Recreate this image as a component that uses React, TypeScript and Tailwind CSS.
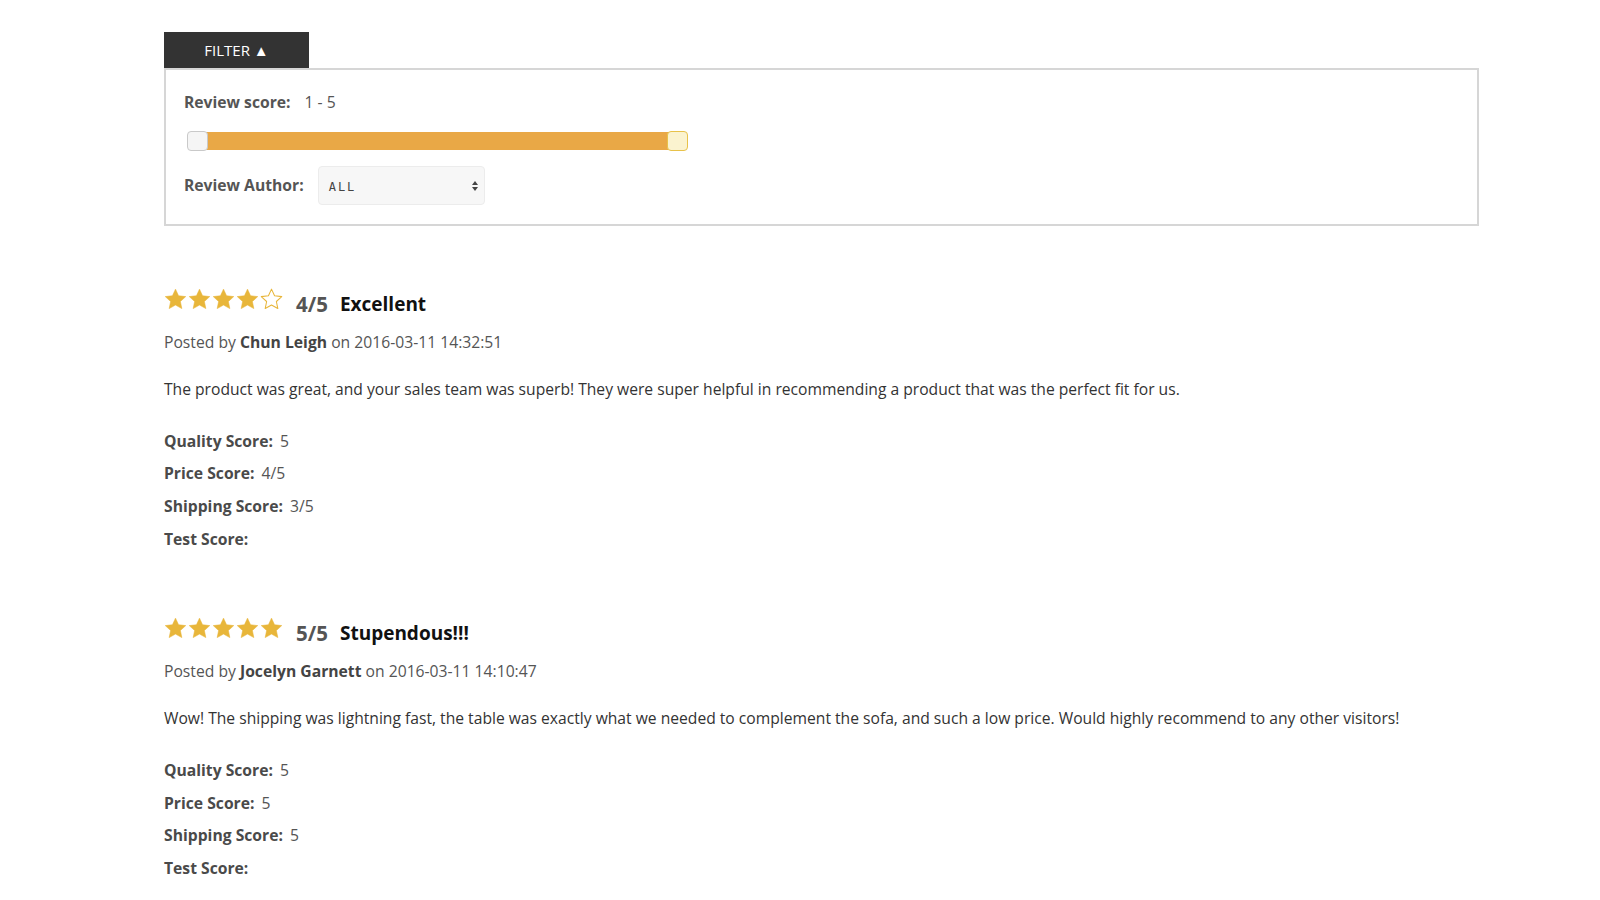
import React from "react";

type Review = {
  score: number;
  title: string;
  author: string;
  date: string;
  body: string;
  quality: string;
  price: string;
  shipping: string;
  test: string;
};

const reviews: Review[] = [
  {
    score: 4,
    title: "Excellent",
    author: "Chun Leigh",
    date: "2016-03-11 14:32:51",
    body: "The product was great, and your sales team was superb! They were super helpful in recommending a product that was the perfect fit for us.",
    quality: "5",
    price: "4/5",
    shipping: "3/5",
    test: "",
  },
  {
    score: 5,
    title: "Stupendous!!!",
    author: "Jocelyn Garnett",
    date: "2016-03-11 14:10:47",
    body: "Wow! The shipping was lightning fast, the table was exactly what we needed to complement the sofa, and such a low price. Would highly recommend to any other visitors!",
    quality: "5",
    price: "5",
    shipping: "5",
    test: "",
  },
];

function Star({ filled }: { filled: boolean }) {
  return (
    <svg width="23" height="22" viewBox="0 0 24 23" className="block">
      <path
        d="M12 1.2l3.2 6.9 7.5.9-5.6 5.1 1.5 7.4L12 17.8l-6.6 3.7 1.5-7.4L1.3 9l7.5-.9z"
        fill={filled ? "#e8b63a" : "none"}
        stroke="#e8b63a"
        strokeWidth={filled ? 0.6 : 1.1}
        strokeLinejoin="round"
      />
    </svg>
  );
}

function ScoreRow({ label, value }: { label: string; value: string }) {
  return (
    <div className="h-[32.8px] flex items-center text-[15.7px]">
      <span className="font-bold text-[#4a4a4a]">{label}:</span>
      <span className="ml-[7px] text-[#555]">{value}</span>
    </div>
  );
}

export default function App() {
  return (
    <div
      className="min-h-[900px] bg-white pl-[164px] pt-[32px]"
      style={{ fontFamily: '"Open Sans", "Liberation Sans", sans-serif' }}
    >
      <div className="w-[1315px]">
        {/* Filter tab */}
        <div className="w-[145px] h-[36px] bg-[#333] text-white text-[15px] flex items-center justify-center">
          FILTER ▲
        </div>

        {/* Filter panel */}
        <div className="border-2 border-[#d6d6d6] h-[158px] pl-[18px] pt-[22px]">
          <div className="flex items-center h-[22px] text-[15.7px]">
            <span className="font-bold text-[#555]">Review score:</span>
            <span className="ml-[14px] text-[#555]">1 - 5</span>
          </div>

          {/* Slider */}
          <div className="mt-[17px] ml-[3px] w-[501px] h-[20px] relative">
            <div className="absolute left-[6px] right-[6px] top-[1px] h-[18px] bg-[#e9a846] rounded-[2px]" />
            <div className="absolute left-0 top-0 w-[21px] h-[20px] rounded-[4px] bg-[#f5f5f5] border border-[#c9c9c9]" />
            <div className="absolute right-0 top-0 w-[21px] h-[20px] rounded-[4px] bg-[#fbf3cf] border border-[#e8c24a]" />
          </div>

          <div className="flex items-center mt-[15px]">
            <span className="font-bold text-[#555] text-[15.7px]">Review Author:</span>
            <div className="ml-[14px] w-[167px] h-[39px] rounded-[4px] bg-[#f7f7f7] border border-[#ececec] flex items-center justify-between pl-[10px] pr-[5px]">
              <span
                className="text-[12px] leading-none pt-[2px] tracking-[2px] text-[#444]"
                style={{ fontFamily: '"DejaVu Sans Mono", "Liberation Mono", monospace' }}
              >
                ALL
              </span>
              <svg width="8" height="12" viewBox="0 0 8 12">
                <path d="M4 1l3 4H1z" fill="#444" />
                <path d="M4 11l3-4H1z" fill="#444" />
              </svg>
            </div>
          </div>
        </div>

        {/* Reviews */}
        <div className="pt-[61px]">
          {reviews.map((r, i) => (
            <div key={i} className={i > 0 ? "mt-[60px]" : ""}>
              <div className="flex items-center h-[24px]">
                <div className="flex gap-[1px]">
                  {[1, 2, 3, 4, 5].map((n) => (
                    <Star key={n} filled={n <= r.score} />
                  ))}
                </div>
                <span className="ml-[13px] text-[20.5px] font-bold text-[#555] mt-[11px]">{r.score}/5</span>
                <span className="ml-[12px] text-[19px] font-bold text-[#111] mt-[11px]">{r.title}</span>
              </div>
              <div className="mt-[21px] text-[15.7px] text-[#555] h-[22px] flex items-center">
                <span>
                  Posted by <span className="font-bold text-[#444]">{r.author}</span> on {r.date}
                </span>
              </div>
              <p className="mt-[24px] text-[15.65px] text-[#333] leading-[22px]">{r.body}</p>
              <div className="mt-[25px]">
                <ScoreRow label="Quality Score" value={r.quality} />
                <ScoreRow label="Price Score" value={r.price} />
                <ScoreRow label="Shipping Score" value={r.shipping} />
                <ScoreRow label="Test Score" value={r.test} />
              </div>
            </div>
          ))}
        </div>
      </div>
    </div>
  );
}
